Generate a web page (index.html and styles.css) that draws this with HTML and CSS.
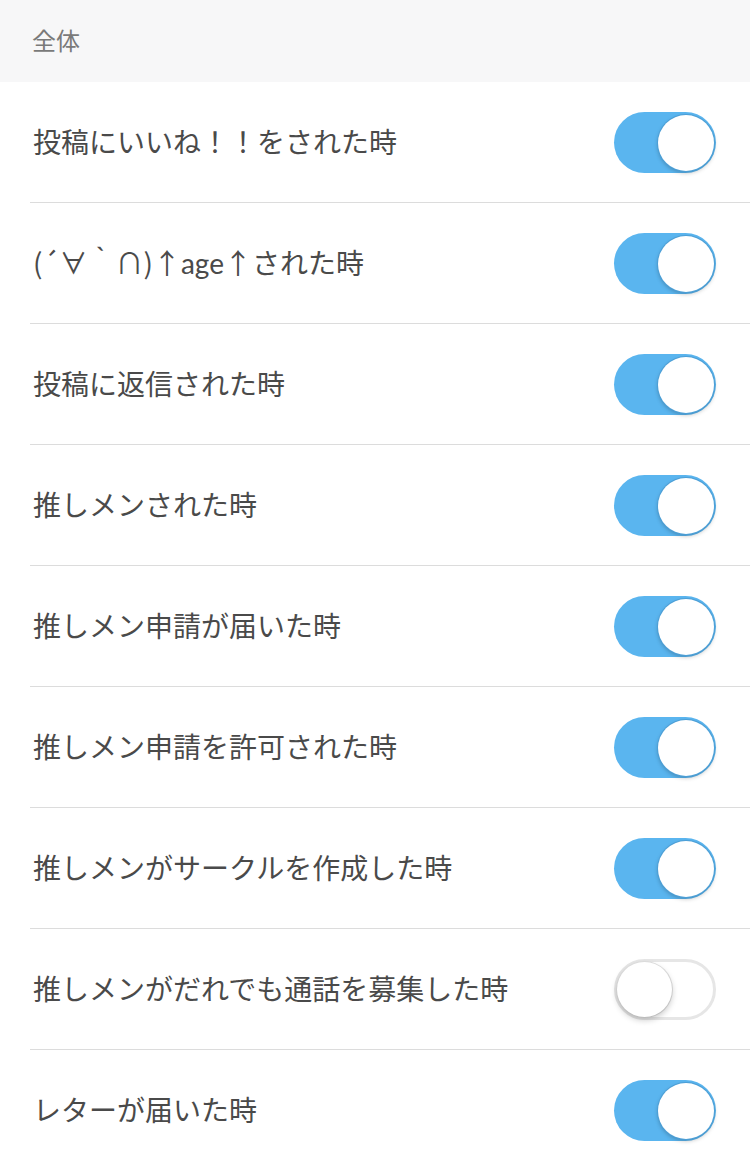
FILE: index.html
```html
<!DOCTYPE html>
<html lang="ja">
<head>
<meta charset="utf-8">
<link rel="stylesheet" href="styles.css">
</head>
<body>
<div class="section-header">全体</div>
<ul class="list">
  <li class="row"><span class="label">投稿にいいね！！をされた時</span><span class="switch on"><span class="knob"></span></span></li>
  <li class="row"><span class="label"><span class="sym">(´∀｀∩)↑</span>age<span class="sym">↑</span>された時</span><span class="switch on"><span class="knob"></span></span></li>
  <li class="row"><span class="label">投稿に返信された時</span><span class="switch on"><span class="knob"></span></span></li>
  <li class="row"><span class="label">推しメンされた時</span><span class="switch on"><span class="knob"></span></span></li>
  <li class="row"><span class="label">推しメン申請が届いた時</span><span class="switch on"><span class="knob"></span></span></li>
  <li class="row"><span class="label">推しメン申請を許可された時</span><span class="switch on"><span class="knob"></span></span></li>
  <li class="row"><span class="label">推しメンがサークルを作成した時</span><span class="switch on"><span class="knob"></span></span></li>
  <li class="row"><span class="label">推しメンがだれでも通話を募集した時</span><span class="switch off"><span class="knob"></span></span></li>
  <li class="row"><span class="label">レターが届いた時</span><span class="switch on"><span class="knob"></span></span></li>
</ul>
</body>
</html>
```
FILE: styles.css
```css
* { box-sizing: border-box; }
html, body { margin: 0; padding: 0; background: #fff; }
body {
  font-family: Lato, "Noto Sans CJK JP", sans-serif;
  color: #4a4a4a;
  overflow: hidden;
}
.section-header {
  height: 82px;
  background: #f7f7f8;
  color: #7a7a7a;
  font-size: 24px;
  padding-left: 32px;
  display: flex;
  align-items: center;
  padding-bottom: 4px;
}
.list {
  list-style: none;
  margin: 0;
  padding: 0 0 0 30px;
}
.row {
  height: 121px;
  border-bottom: 1px solid #dcdcdc;
  display: flex;
  align-items: center;
  justify-content: space-between;
  padding-right: 34px;
  padding-bottom: 3px;
}
.label {
  font-size: 28px;
  padding-left: 3px;
  letter-spacing: 0;
}
.sym {
  font-family: "Noto Sans CJK JP", sans-serif;
}
.switch {
  position: relative;
  width: 102px;
  height: 61px;
  border-radius: 31px;
  flex: none;
  margin-top: 3px;
}
.switch.on { background: #5ab5ef; }
.switch.off { background: #fff; border: 3px solid #e6e6e6; }
.knob {
  position: absolute;
  top: 3px;
  width: 56px;
  height: 56px;
  border-radius: 50%;
  background: #fff;
}
.switch.on .knob {
  right: 2px;
  top: 3px;
  box-shadow: 0 0 0 1px #4d9fd6, 0 2px 4px rgba(0,0,0,0.25);
}
.switch.off .knob {
  left: 0;
  top: 0;
  width: 55px;
  height: 55px;
  box-shadow: 0 3px 6px rgba(0,0,0,0.22), 0 0 0 1px #e2e2e2;
}
```
